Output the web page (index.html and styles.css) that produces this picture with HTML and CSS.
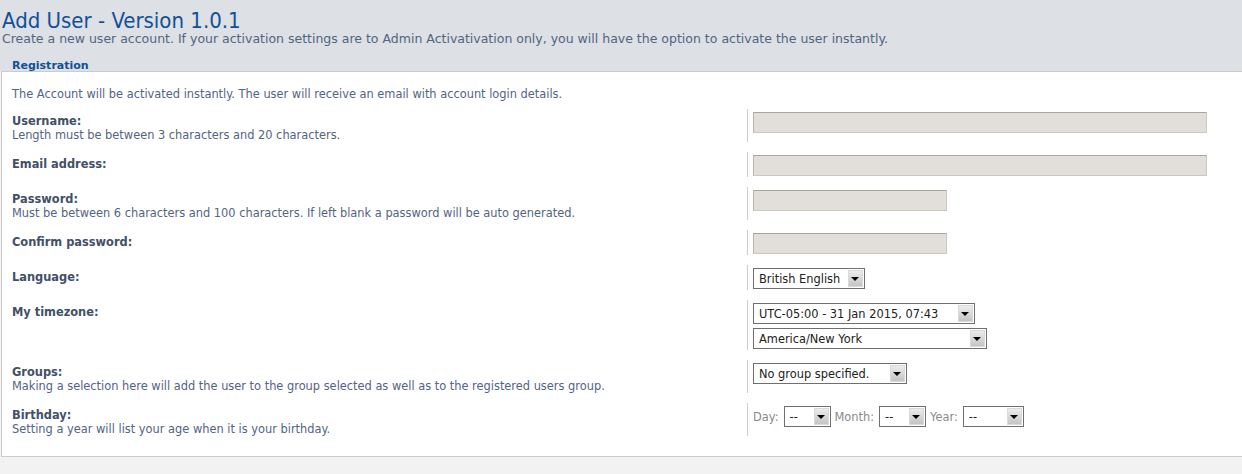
FILE: index.html
```html
<!DOCTYPE html>
<html lang="en">
<head>
  <meta charset="UTF-8" />
  <title>Add User - Version 1.0.1</title>
  <link rel="stylesheet" href="styles.css">
</head>
<body>
  <div class="head">
    <h1>Add User - Version 1.0.1</h1>
    <p class="intro">Create a new user account. If your activation settings are to Admin Activativation only, you will have the option to activate the user instantly.</p>
    <h3 class="panel-title">Registration</h3>
  </div>

  <form class="panel">
    <p class="note">The Account will be activated instantly. The user will receive an email with account login details.</p>

    <div class="row">
      <div class="term">
        <label for="username">Username:</label>
        <span class="explain">Length must be between 3 characters and 20 characters.</span>
      </div>
      <div class="field"><input type="text" id="username" class="text wide" /></div>
    </div>

    <div class="row">
      <div class="term"><label for="email">Email address:</label></div>
      <div class="field"><input type="text" id="email" class="text wide" /></div>
    </div>

    <div class="row">
      <div class="term">
        <label for="password">Password:</label>
        <span class="explain">Must be between 6 characters and 100 characters. If left blank a password will be auto generated.</span>
      </div>
      <div class="field"><input type="password" id="password" class="text short" /></div>
    </div>

    <div class="row">
      <div class="term"><label for="confirm">Confirm password:</label></div>
      <div class="field"><input type="password" id="confirm" class="text short" /></div>
    </div>

    <div class="row">
      <div class="term"><label for="lang">Language:</label></div>
      <div class="field">
        <span class="select sel-lang"><select id="lang"><option>British English</option></select></span>
      </div>
    </div>

    <div class="row">
      <div class="term"><label for="tz-date">My timezone:</label></div>
      <div class="field stack">
        <span class="select sel-tzdate"><select id="tz-date"><option>UTC-05:00 - 31 Jan 2015, 07:43</option></select></span>
        <span class="select sel-tz"><select id="tz"><option>America/New York</option></select></span>
      </div>
    </div>

    <div class="row">
      <div class="term">
        <label for="group">Groups:</label>
        <span class="explain">Making a selection here will add the user to the group selected as well as to the registered users group.</span>
      </div>
      <div class="field">
        <span class="select sel-group"><select id="group"><option>No group specified.</option></select></span>
      </div>
    </div>

    <div class="row">
      <div class="term">
        <label for="bday">Birthday:</label>
        <span class="explain">Setting a year will list your age when it is your birthday.</span>
      </div>
      <div class="field birthday">
        <span class="small-label">Day:</span>
        <span class="select sel-day"><select id="bday"><option>--</option></select></span>
        <span class="small-label">Month:</span>
        <span class="select sel-day"><select><option>--</option></select></span>
        <span class="small-label">Year:</span>
        <span class="select sel-year"><select><option>--</option></select></span>
      </div>
    </div>
  </form>
</body>
</html>
```

FILE: styles.css
```css
body {
  margin: 0;
  background: #f2f2f2;
  font-family: Verdana, "DejaVu Sans", sans-serif;
  font-size: 11.4px;
  line-height: 14px;
  color: #536482;
  overflow: hidden;
}

.head {
  background: #dde0e4;
  padding: 10px 0 0 0;
}

h1 {
  margin: 0 0 0 2px;
  font-family: "Trebuchet MS", "DejaVu Sans Condensed", sans-serif;
  font-size: 22px;
  line-height: 22px;
  font-weight: normal;
  color: #115098;
}

.intro {
  margin: 0 0 0 2px;
  padding-top: 1px;
  font-size: 12.5px;
  line-height: 12px;
}

.panel-title {
  margin: 0;
  padding: 15px 0 0 12px;
  font-size: 11px;
  line-height: 11px;
  font-weight: bold;
  color: #115098;
}

.panel {
  margin: 0 -20px 0 1px;
  padding: 15px 0 10px 10px;
  background: #fff;
  border: 1px solid #ccc;
}

.note {
  margin: 0 0 8px 0;
}

.row {
  display: flex;
  margin-bottom: 10px;
}

.term {
  width: 735px;
  padding-top: 5px;
  border-right: 1px solid #ccc;
}

.term label {
  display: block;
  font-weight: bold;
  color: #425067;
}

.explain {
  display: block;
}

.field {
  padding: 3px 0 1px 5px;
}

.stack {
  display: flex;
  flex-direction: column;
  align-items: flex-start;
  gap: 4px;
}

.text {
  display: block;
  box-sizing: border-box;
  height: 21px;
  margin: 0;
  background: #e2dfda;
  border: 1px solid #cbc8c2;
  border-top-color: #a9a6a0;
  border-left-color: #b8b5af;
}

.wide {
  width: 454px;
}

.short {
  width: 194px;
}

.select {
  position: relative;
  display: block;
  height: 21px;
}

.select select {
  appearance: none;
  -webkit-appearance: none;
  box-sizing: border-box;
  width: 100%;
  height: 21px;
  margin: 0;
  padding: 0 0 0 5px;
  background: #fff;
  border: 1px solid #6f6f6f;
  border-radius: 0;
  font-family: Verdana, "DejaVu Sans", sans-serif;
  font-size: 11.4px;
  color: #222;
}

.select::after {
  content: "";
  position: absolute;
  top: 2px;
  right: 2px;
  bottom: 2px;
  width: 15px;
  background: linear-gradient(#ececec, #c4c4c4);
  border: 1px solid #d9d9d9;
  box-sizing: border-box;
  pointer-events: none;
}

.select::before {
  content: "";
  position: absolute;
  top: 9px;
  right: 6px;
  z-index: 1;
  border-left: 4px solid transparent;
  border-right: 4px solid transparent;
  border-top: 4px solid #000;
  pointer-events: none;
}

.sel-lang { width: 112px; }
.sel-tzdate { width: 222px; }
.sel-tz { width: 234px; }
.sel-group { width: 154px; }
.sel-day { width: 47px; }
.sel-year { width: 61px; }

.birthday {
  display: flex;
  align-items: center;
  align-self: flex-start;
  gap: 5px;
}

.birthday .small-label + .select + .small-label {
  margin-left: -1px;
}

.small-label {
  color: #8a8a8a;
}
```
